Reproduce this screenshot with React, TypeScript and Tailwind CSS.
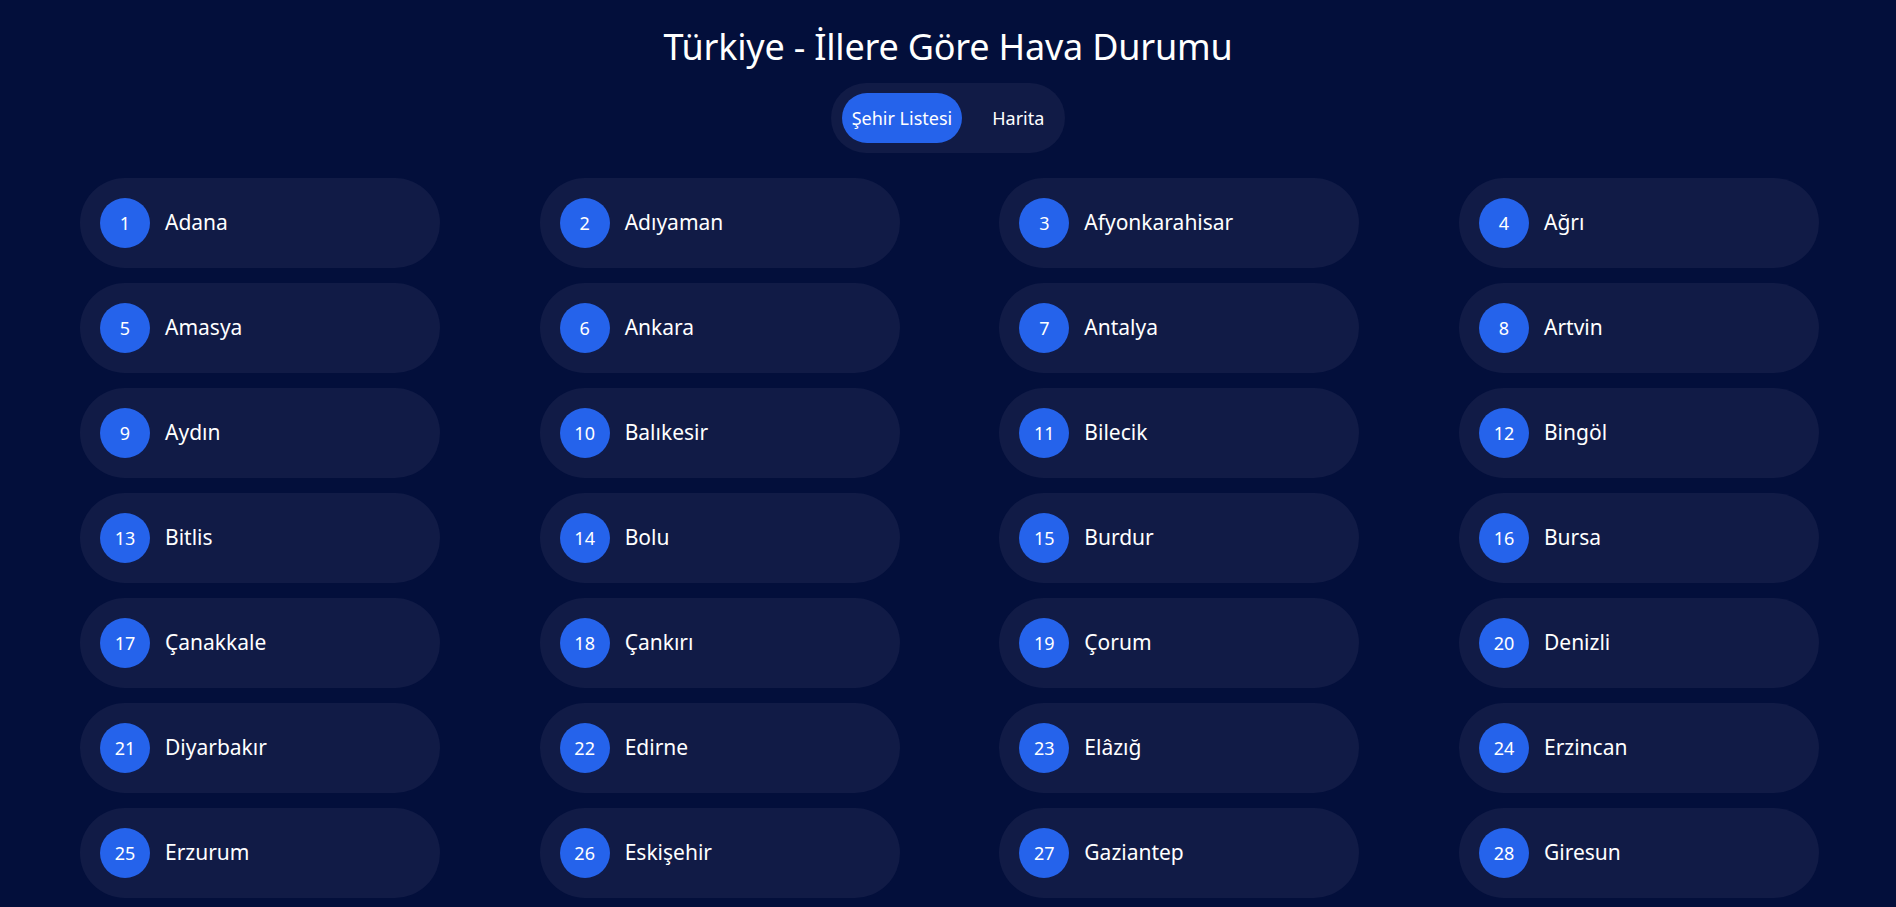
import React from "react";

const cities = [
  "Adana","Adıyaman","Afyonkarahisar","Ağrı","Amasya","Ankara","Antalya","Artvin","Aydın","Balıkesir",
  "Bilecik","Bingöl","Bitlis","Bolu","Burdur","Bursa","Çanakkale","Çankırı","Çorum","Denizli",
  "Diyarbakır","Edirne","Elâzığ","Erzincan","Erzurum","Eskişehir","Gaziantep","Giresun","Gümüşhane","Hakkâri",
  "Hatay","Isparta","Mersin","İstanbul","İzmir","Kars","Kastamonu","Kayseri","Kırklareli","Kırşehir",
  "Kocaeli","Konya","Kütahya","Malatya","Manisa","Kahramanmaraş","Mardin","Muğla","Muş","Nevşehir",
  "Niğde","Ordu","Rize","Sakarya","Samsun","Siirt","Sinop","Sivas","Tekirdağ","Tokat",
  "Trabzon","Tunceli","Şanlıurfa","Uşak","Van","Yozgat","Zonguldak","Aksaray","Bayburt","Karaman",
  "Kırıkkale","Batman","Şırnak","Bartın","Ardahan","Iğdır","Yalova","Karabük","Kilis","Osmaniye","Düzce",
];

export default function App() {
  return (
    <div
      className="min-h-screen bg-[#030f3b] text-white"
      style={{ fontFamily: '"Noto Sans", "Open Sans", sans-serif' }}
    >
      <div className="flex flex-col items-center pt-[23px]">
        <h1 className="text-[36px] leading-[48px] font-normal tracking-[-0.2px]">
          Türkiye - İllere Göre Hava Durumu
        </h1>
        <div className="mt-[12px] flex h-[70px] items-center gap-[20px] rounded-full bg-[#111b46] pl-[11px] pr-[11px]">
          <button className="h-[50px] rounded-full bg-[#2563eb] px-[10px] text-[18px] text-white">
            Şehir Listesi
          </button>
          <button className="h-[50px] rounded-full px-[10px] text-[18px] text-white">
            Harita
          </button>
        </div>
      </div>
      <div className="mt-[25px] grid grid-cols-[repeat(4,360px)] gap-x-[99.67px] gap-y-[15px] pl-[80px] pb-[20px]">
        {cities.map((c, i) => (
          <div
            key={c}
            className="flex h-[90px] items-center gap-[15px] rounded-full bg-[#111b46] px-[20px]"
          >
            <div className="flex h-[50px] w-[50px] shrink-0 items-center justify-center rounded-full bg-[#2563eb] text-[18px]">
              {i + 1}
            </div>
            <span className="text-[21px]">{c}</span>
          </div>
        ))}
      </div>
    </div>
  );
}
